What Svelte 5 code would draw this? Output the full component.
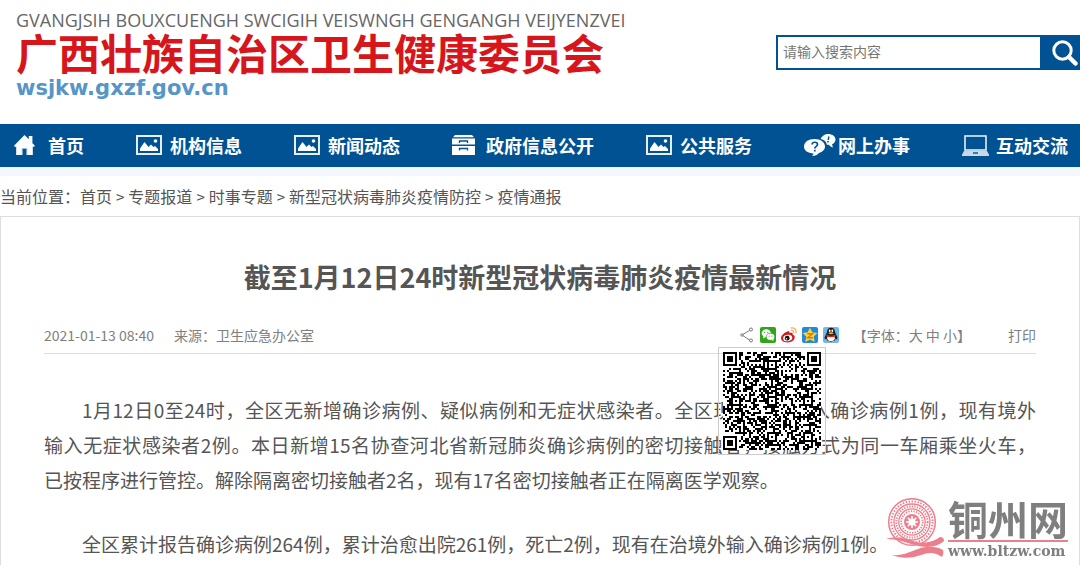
<script lang="ts">
  type NavItem = { label: string; icon: 'home' | 'picture' | 'drawer' | 'chat' | 'laptop' };

  const nav: NavItem[] = [
    { label: '首页', icon: 'home' },
    { label: '机构信息', icon: 'picture' },
    { label: '新闻动态', icon: 'picture' },
    { label: '政府信息公开', icon: 'drawer' },
    { label: '公共服务', icon: 'picture' },
    { label: '网上办事', icon: 'chat' },
    { label: '互动交流', icon: 'laptop' }
  ];

  const crumbs = ['首页', '专题报道', '时事专题', '新型冠状病毒肺炎疫情防控', '疫情通报'];

  // each paragraph is a list of typeset lines
  const paragraphs = [
    [
      '1月12日0至24时，全区无新增确诊病例、疑似病例和无症状感染者。全区现有境外输入确诊病例1例，现有境外',
      '输入无症状感染者2例。本日新增15名协查河北省新冠肺炎确诊病例的密切接触者，接触方式为同一车厢乘坐火车，',
      '已按程序进行管控。解除隔离密切接触者2名，现有17名密切接触者正在隔离医学观察。'
    ],
    ['全区累计报告确诊病例264例，累计治愈出院261例，死亡2例，现有在治境外输入确诊病例1例。']
  ];

  const QR_SIZE = 49;

  function inSquare(x: number, y: number, left: number, top: number, size: number) {
    return x >= left && x < left + size && y >= top && y < top + size;
  }

  // distance from a centre, counted in whole rings
  function ring(x: number, y: number, cx: number, cy: number) {
    return Math.max(Math.abs(x - cx), Math.abs(y - cy));
  }

  function buildQr() {
    const last = QR_SIZE - 1;
    const aligns = [[24, 6], [6, 24], [24, 24], [42, 24], [24, 42], [42, 42]];
    let seed = 20210113;
    let d = '';
    for (let y = 0; y < QR_SIZE; y++) {
      for (let x = 0; x < QR_SIZE; x++) {
        seed = (seed * 1103515245 + 12345) % 2147483648;
        let dark = seed / 2147483648 < 0.5;
        if (y === 6) dark = x % 2 === 0;
        if (x === 6) dark = y % 2 === 0;
        for (const [ax, ay] of aligns) {
          if (inSquare(x, y, ax - 2, ay - 2, 5)) dark = ring(x, y, ax, ay) !== 1;
        }
        for (const [fx, fy] of [[3, 3], [last - 3, 3], [3, last - 3]]) {
          const r = ring(x, y, fx, fy);
          if (r <= 4) dark = r !== 2 && r !== 4;
        }
        if (dark) d += `M${x} ${y}h1v1h-1z`;
      }
    }
    return d;
  }

  const qrPath = buildQr();

  let keyword = $state('');
</script>

<header class="top">
  <a class="brand" href="#home">
    <span class="brand-za">GVANGJSIH BOUXCUENGH SWCIGIH VEISWNGH GENGANGH VEIJYENZVEI</span>
    <span class="brand-name">广西壮族自治区卫生健康委员会</span>
    <span class="brand-url">wsjkw.gxzf.gov.cn</span>
  </a>
  <form class="search" onsubmit={(e) => e.preventDefault()}>
    <input type="text" aria-label="搜索" placeholder="请输入搜索内容" bind:value={keyword} />
    <button type="submit" aria-label="搜索">
      <svg width="26" height="26" viewBox="0 0 26 26" fill="none" stroke="#fff">
        <circle cx="10.500" cy="10.500" r="8.700" stroke-width="3" />
        <path d="M17 17l6.500 6.500" stroke-width="4.500" stroke-linecap="round" />
      </svg>
    </button>
  </form>
</header>

<nav class="nav">
  {#each nav as item}
    <a class="nav-item" href="#nav">
      <span class="nav-icon">
        {#if item.icon === 'home'}
          <svg width="21" height="21" viewBox="0 0 21 21" fill="#fff">
            <path d="M10.500 0L0 10.800 1.200 12.200 2.200 11.300V20H18.800v-8.700l1 .8 1.200-1.300-2.600-2.600V1h-3.600v3.200z" />
            <path d="M8.200 20v-6.500h4.600V20" fill="#015293" stroke="#9fbedb" stroke-width="1" />
          </svg>
        {:else if item.icon === 'picture'}
          <svg width="26" height="20" viewBox="0 0 26 20">
            <rect x="1" y="1" width="24" height="18" fill="none" stroke="#e6eef6" stroke-width="2" />
            <path d="M4 16v-2.500L8.500 7l4 5 2.500-2.500 2.500 2.500 1.500-1 3 3v2z" fill="#fff" />
            <circle cx="19.500" cy="6" r="1.800" fill="#fff" />
          </svg>
        {:else if item.icon === 'drawer'}
          <svg width="23" height="20" viewBox="0 0 23 20" fill="#fff">
            <path d="M3 0h17l2 2.300H1z" />
            <path d="M0 3.500h23v6H0zM0 11h23v9H0z" />
            <path d="M7.500 8V6h8v2M7.500 15.500v-2h8v2" fill="none" stroke="#015293" stroke-width="1.300" />
          </svg>
        {:else if item.icon === 'chat'}
          <svg width="32" height="22" viewBox="0 0 32 22" fill="#fff">
            <path d="M16.500 5C18 2 20.500 0 24 0c4 0 7.500 2.200 7.500 5.500 0 2.200-1.500 4-3.500 5l1 3c-2-.5-3.500-1.500-4.200-2.700h-2C22.500 7.500 20 5.500 16.500 5z" />
            <path d="M10.500 5C16.500 5 21 8 21 12.500c0 3.300-2.500 5.500-6 6.500-1.500 2-4 3-7 3 1-.8 1.500-1.700 1.500-2.500C4 19.200 0 16.700 0 12.500 0 8 4.500 5 10.500 5z" />
            <path d="M8 10.500c.3-3 5.500-3 5.500 0 0 2-2.700 1.700-2.700 4M10.800 15.800v1.700" fill="none" stroke="#015293" stroke-width="1.700" />
            <path d="M24.800 2.500l-.5 3.500M24 7v1.500" stroke="#015293" stroke-width="1.500" />
          </svg>
        {:else}
          <svg width="27" height="21" viewBox="0 0 27 21">
            <rect x="3" y="1" width="21" height="14" fill="none" stroke="#e6eef6" stroke-width="1.600" />
            <path d="M2 16h23l2 3.500V21H0v-1.500z" fill="#c9d9e8" />
            <path d="M11 18h5" stroke="#015293" stroke-width="1.400" />
          </svg>
        {/if}
      </span>
      {item.label}
    </a>
  {/each}
</nav>

<div class="crumbs">
  <span>当前位置：</span>
  {#each crumbs as crumb, i}
    {#if i > 0}<span class="sep">&gt;</span>{/if}
    <a href="#crumb">{crumb}</a>
  {/each}
</div>

<main class="article">
  <h1>截至1月12日24时新型冠状病毒肺炎疫情最新情况</h1>

  <div class="meta">
    <time>2021-01-13 08:40</time>
    <span class="source">来源：卫生应急办公室</span>
    <div class="share">
      <button type="button" aria-label="分享">
        <svg width="16" height="16" viewBox="0 0 16 16" fill="#fff" stroke="#777" stroke-width="1">
          <path d="M12 2.500L3 8l9 6" fill="none" />
          <circle cx="12" cy="2.500" r="1.500" /><circle cx="3" cy="8" r="1.200" /><circle cx="12" cy="13.500" r="1.500" />
        </svg>
      </button>
      <div class="wechat">
        <button type="button" aria-label="微信">
          <svg width="16" height="16" viewBox="0 0 16 16">
            <rect width="16" height="16" rx="2" fill="#2fa51c" />
            <ellipse cx="6.300" cy="6.200" rx="4.600" ry="3.900" fill="#fff" />
            <path d="M3.500 9l-.5 2.500 3-1.500z" fill="#fff" />
            <ellipse cx="10.500" cy="9.800" rx="4.200" ry="3.500" fill="#fff" stroke="#2fa51c" stroke-width=".7" />
            <path d="M11.500 12.700l2 1.200-.3-2.500z" fill="#fff" />
            <path d="M4.700 4.800v1.200M7.800 4.800v1.200M9.200 8.700v1M11.900 8.700v1" stroke="#2fa51c" />
          </svg>
        </button>
        <div class="qr">
          <svg viewBox="0 0 {QR_SIZE} {QR_SIZE}" shape-rendering="crispEdges" role="img" aria-label="二维码">
            <path d={qrPath} fill="#000" />
          </svg>
        </div>
      </div>
      <button type="button" aria-label="微博">
        <svg width="16" height="16" viewBox="0 0 16 16">
          <path d="M6.500 4.500c1.700-.7 2.500.2 2 1.700 2-.7 3.700-.3 3.200 1.500 1.700.5 2.500 1.800 1.800 3.700-1 2.500-4 4-7.300 4C2.800 15.400 0 13.800 0 11c0-2.600 3.500-5.500 6.500-6.500z" fill="#d8151b" />
          <ellipse cx="6.700" cy="11" rx="4.600" ry="3.200" fill="#fff" transform="rotate(-8 6.700 11)" />
          <circle cx="6.200" cy="11.200" r="2.400" fill="#111" />
          <circle cx="5.500" cy="11.800" r=".8" fill="#fff" />
          <path d="M9.800 1c3.700-.7 6 1.700 5 5.300M10 3.500c1.800-.3 3 .8 2.500 2.500" fill="none" stroke="#f2b25a" stroke-width="1.300" />
        </svg>
      </button>
      <button type="button" aria-label="QQ空间">
        <svg width="16" height="16" viewBox="0 0 16 16">
          <rect width="16" height="16" rx="2" fill="#1f8ae0" />
          <path d="M8 .8l2.300 4.500 5.200.7-3.800 3.600 1 5.400L8 12.400 3.300 15l1-5.400L.5 6l5.200-.7z" fill="#ffd52e" />
          <path d="M5.200 6.800h5.300l-4.800 4h5.300" fill="none" stroke="#d97b00" stroke-width="1.400" />
        </svg>
      </button>
      <button type="button" aria-label="QQ">
        <svg width="16" height="16" viewBox="0 0 16 16">
          <rect width="16" height="16" rx="2" fill="#6db9ea" />
          <path d="M8 .8c2.800 0 4 2 4 4.500l1.500 3c1.200 2.200 1 4 .4 4-.5 0-.8-.5-1.100-1-.4 2-2.200 3.400-4.800 3.400s-4.400-1.400-4.800-3.400c-.3.500-.6 1-1.100 1-.6 0-.8-1.800.4-4l1.500-3C4 2.800 5.200.8 8 .8z" fill="#1b1b1f" />
          <path d="M4.500 9h7l.3 2.500C11.300 13.500 10 14 8 14s-3.300-.5-3.800-2.500z" fill="#fff" />
          <ellipse cx="6.700" cy="3.800" rx=".9" ry="1.300" fill="#fff" /><ellipse cx="9.300" cy="3.800" rx=".9" ry="1.300" fill="#fff" />
          <path d="M3.300 7.500c3 1.500 6.400 1.500 9.400 0v1.700c-3 1.300-6.400 1.300-9.400 0z" fill="#e2231a" />
          <ellipse cx="8" cy="6.200" rx="2.600" ry="1" fill="#f6a81c" />
          <path d="M3 15.300c.5-1.200 4-1.500 5-.3 1-1.200 4.500-.9 5 .3z" fill="#f6a81c" />
        </svg>
      </button>
    </div>
    <div class="sizes">
      【字体：<button type="button">大</button> <button type="button">中</button> <button type="button">小</button>】
    </div>
    <button type="button">打印</button>
  </div>

  <div class="content">
    {#each paragraphs as lines}
      <p>
        {#each lines as line}
          <span>{line}</span>
        {/each}
      </p>
    {/each}
  </div>
</main>

<div class="watermark">
  <svg width="58" height="62" viewBox="0 0 58 62" fill="none" stroke="#ec7f8d">
    <circle cx="26" cy="24" r="23.300" stroke-width="1.500" />
    <circle cx="26" cy="24" r="20.600" stroke-width="2" stroke-dasharray="1.500 1.500" />
    <circle cx="26" cy="24" r="18" stroke-width="1.300" />
    <circle cx="26" cy="24" r="15.600" stroke-width="2" stroke-dasharray="1.300 1.300" />
    <circle cx="26" cy="24" r="13.200" stroke-width="1.300" />
    <circle cx="26" cy="24" r="10.800" stroke-width="1.800" stroke-dasharray="1.300 1.300" />
    <circle cx="26" cy="24" r="8" fill="#ec7f8d" stroke="none" />
    <path d="M26 18v12M20 24h12M21.800 19.800l8.400 8.400M30.200 19.800l-8.400 8.400" stroke="#fff" stroke-width="1.600" />
    <circle cx="26" cy="24" r="3.600" fill="#fff" stroke="none" />
    <path d="M0 41c10-3 18-1 27 2s19 2 27-4c3 0 4 2 4 4-8 7-19 7-29 4s-18-6-29-6z" fill="#ec7f8d" stroke="none" />
    <path d="M6 57c10 1 18-3 26-6s18-3 25 1c1 2 0 5-1 7-7-5-13-5-21-2s-19 4-29 0z" fill="#ec7f8d" stroke="none" />
  </svg>
  <div class="wm-text">
    <span class="wm-name">铜州网</span>
    <span class="wm-url">www.bltzw.com</span>
  </div>
</div>

<style>
  :global(body) {
    background: #fff;
    color: #555;
    font-family: 'Noto Sans CJK SC', sans-serif;
    font-size: 14px;
  }
  a { color: inherit; text-decoration: none; }
  button {
    padding: 0; border: 0; background: none;
    color: inherit; font: inherit; cursor: pointer;
  }
  svg { display: block; flex-shrink: 0; }

  .top {
    display: flex; justify-content: space-between; align-items: flex-start;
    height: 124px;
  }
  .brand { display: flex; flex-direction: column; padding: 8px 0 0 16px; white-space: nowrap; }
  .brand-za { font: 18px/24px 'Open Sans', sans-serif; color: #666; }
  .brand-name { font-size: 42px; font-weight: 700; line-height: 40px; color: #d7161b; }
  .brand-url { margin-top: 6px; font: bold 21px/20px 'DejaVu Sans', sans-serif; color: #5595c8; }

  .search { display: flex; width: 304px; height: 35px; margin-top: 35px; }
  .search input {
    flex: 1; min-width: 0; box-sizing: border-box; padding: 0 5px 3px;
    border: 2px solid #015293; border-right: 0; border-radius: 0; outline: 0;
    background: #fff; color: #555; font: inherit;
  }
  .search input::placeholder { color: #777; opacity: 1; }
  .search button {
    display: flex; align-items: center; justify-content: flex-end;
    width: 40px; padding-right: 2px; background: #015293;
  }

  .nav {
    display: flex; justify-content: space-between; align-items: center;
    height: 42px; padding: 0 12px 1px 14px;
    background: #015293; border-bottom: 9px solid #f4f8fe;
    color: #fff; font-size: 18px; font-weight: 700; white-space: nowrap;
  }
  .nav-item { display: flex; align-items: center; }
  .nav-icon { width: 34px; }

  .crumbs {
    display: flex; align-items: center; height: 40px;
    font-size: 16px; white-space: nowrap;
  }
  .sep { margin: 0 4px; font-size: 15px; }

  .article { border: 1px solid #ddd; border-bottom: 0; padding: 0 43px 4px; }
  h1 {
    margin: 0; padding-top: 40px;
    font-size: 27px; font-weight: 700; line-height: 40px; text-align: center; color: #555;
  }

  .meta {
    display: flex; align-items: center; height: 36px; margin-top: 20px;
    border-bottom: 1px solid #ddd; color: #808080; white-space: nowrap;
  }
  .source { margin-left: 20px; }
  .share { display: flex; gap: 5px; margin-left: auto; }
  .share button { display: block; }
  .wechat { position: relative; }
  .qr {
    position: absolute; top: 20px; left: 50%; margin-left: -50px; z-index: 2;
    width: 98px; padding: 4px; border: 1px solid #ccc;
  }
  .qr svg { background: #fff; }
  .sizes { margin: 0 37px 0 14px; }

  .content { padding-top: 38px; color: #555; font-size: 19px; line-height: 35px; }
  .content p { margin: 0 0 29px; }
  .content p:last-child { margin-bottom: 0; }
  .content span { display: block; text-align: justify; text-align-last: justify; }
  .content span:first-child { text-indent: 2em; }
  .content span:last-child { text-align-last: auto; }

  .watermark { position: fixed; right: 12px; bottom: 5px; display: flex; align-items: flex-end; gap: 4px; }
  .wm-text { display: flex; flex-direction: column; color: #7f7f7f; }
  .wm-name {
    padding-bottom: 3px; border-bottom: 2px solid #ec7f8d;
    font-size: 40px; font-weight: 700; line-height: 38px;
  }
  .wm-url { font: bold 14px/18px 'DejaVu Serif', serif; }
</style>
